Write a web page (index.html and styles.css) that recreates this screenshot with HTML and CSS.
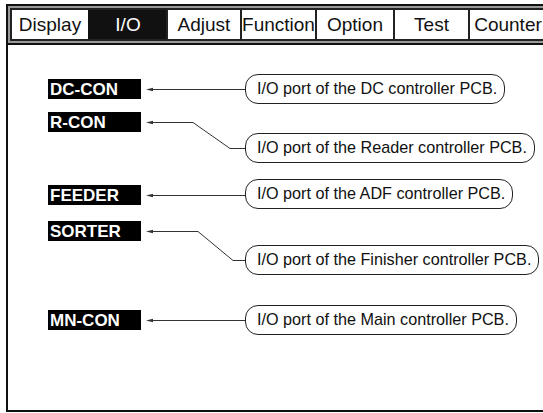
FILE: index.html
```html
<!DOCTYPE html>
<html lang="en">
    <head>
        <title>I/O</title>
        <meta charset="utf-8">
        <link rel="stylesheet" href="styles.css">
    </head>

    <body>
        <div class="screen">
            <div class="tabbar">
                <div class="tabs">
                    <div class="tab tab-display">Display</div>
                    <div class="tab tab-io active">I/O</div>
                    <div class="tab tab-adjust">Adjust</div>
                    <div class="tab tab-function">Function</div>
                    <div class="tab tab-option">Option</div>
                    <div class="tab tab-test">Test</div>
                    <div class="tab tab-counter">Counter</div>
                </div>
            </div>

            <div class="diagram">
                <svg class="wires" width="535" height="365" viewBox="0 0 535 365">
                    <g fill="none" stroke="#333" stroke-width="1">
                        <polyline points="141,44.5 237,44.5"/>
                        <polyline points="141,77.5 185,77.5 222,103.5 237,103.5"/>
                        <polyline points="141,150.5 237,150.5"/>
                        <polyline points="141,186.5 190,186.5 225,215.5 237,215.5"/>
                        <polyline points="141,275.5 237,275.5"/>
                    </g>
                    <g fill="#333">
                        <polygon points="138,44.5 145,42.8 145,46.2"/>
                        <polygon points="138,77.5 145,75.8 145,79.2"/>
                        <polygon points="138,150.5 145,148.8 145,152.2"/>
                        <polygon points="138,186.5 145,184.8 145,188.2"/>
                        <polygon points="138,275.5 145,273.8 145,277.2"/>
                    </g>
                </svg>

                <div class="labels">
                    <div class="label">DC-CON</div>
                    <div class="label">R-CON</div>
                    <div class="label">FEEDER</div>
                    <div class="label">SORTER</div>
                    <div class="label">MN-CON</div>
                </div>

                <div class="notes">
                    <div class="note">I/O port of the DC controller PCB.</div>
                    <div class="note">I/O port of the Reader controller PCB.</div>
                    <div class="note">I/O port of the ADF controller PCB.</div>
                    <div class="note">I/O port of the Finisher controller PCB.</div>
                    <div class="note">I/O port of the Main controller PCB.</div>
                </div>
            </div>
        </div>
    </body>
</html>
```

FILE: styles.css
```css
*, *::before, *::after{
    box-sizing: border-box;
    font-family: "Liberation Sans", Arial, sans-serif;
}

html, body{
    overflow: hidden;
}

body{
    margin: 0;
    padding: 0;
    background: #fff;
    color: #111;
}

.screen{
    margin: 4px 0 0 6px;
    width: 537px;
    height: 408px;
    border: 2px solid #111;
    border-right: 0;
    overflow: hidden;
}

/* tab strip */

.tabbar{
    background: #9a9a9a;
    padding: 2px 0 2px 2px;
    border-bottom: 2px solid #111;
    overflow: hidden;
}

.tabs{
    display: flex;
    width: 600px;
    border: 2px solid #222;
    border-right: 0;
}

.tab{
    box-sizing: content-box;
    flex-shrink: 0;
    height: 29px;
    line-height: 30px;
    font-size: 19px;
    text-align: center;
    white-space: nowrap;
    background: #fff;
    border-left: 2px solid #222;
}

.tab:first-child{
    border-left: 0;
}

.tab.active{
    background: #111;
    border-left-color: #111;
    color: #fff;
}

.tab-display{ width: 76px; }
.tab-io{ width: 76px; }
.tab-adjust{ width: 72px; }
.tab-function{ width: 73px; }
.tab-option{ width: 76px; }
.tab-test{ width: 73px; }
.tab-counter{ width: 76px; }

/* diagram */

.diagram{
    position: relative;
    display: flex;
    height: 364px;
}

.wires{
    position: absolute;
    left: 0;
    top: 0;
}

.labels{
    display: flex;
    flex-direction: column;
    margin-left: 40px;
    width: 93px;
    flex-shrink: 0;
}

.label{
    height: 20px;
    line-height: 21px;
    padding-left: 2px;
    background: #000;
    color: #fff;
    font-size: 17px;
    font-weight: bold;
}

.label:nth-child(1){ margin-top: 34px; }
.label:nth-child(2){ margin-top: 13px; }
.label:nth-child(3){ margin-top: 53px; }
.label:nth-child(4){ margin-top: 16px; }
.label:nth-child(5){ margin-top: 69px; }

.notes{
    display: flex;
    flex-direction: column;
    align-items: flex-start;
    margin-left: 104px;
}

.note{
    position: relative;
    height: 30px;
    line-height: 27px;
    padding: 0 7px 0 11px;
    border: 1.5px solid #222;
    border-radius: 13px;
    background: #fff;
    font-size: 16.2px;
    white-space: nowrap;
}

.note:nth-child(1){ margin-top: 29px; }
.note:nth-child(2){ margin-top: 29px; }
.note:nth-child(3){ margin-top: 16px; }
.note:nth-child(4){ margin-top: 36px; }
.note:nth-child(5){ margin-top: 30px; }
```
